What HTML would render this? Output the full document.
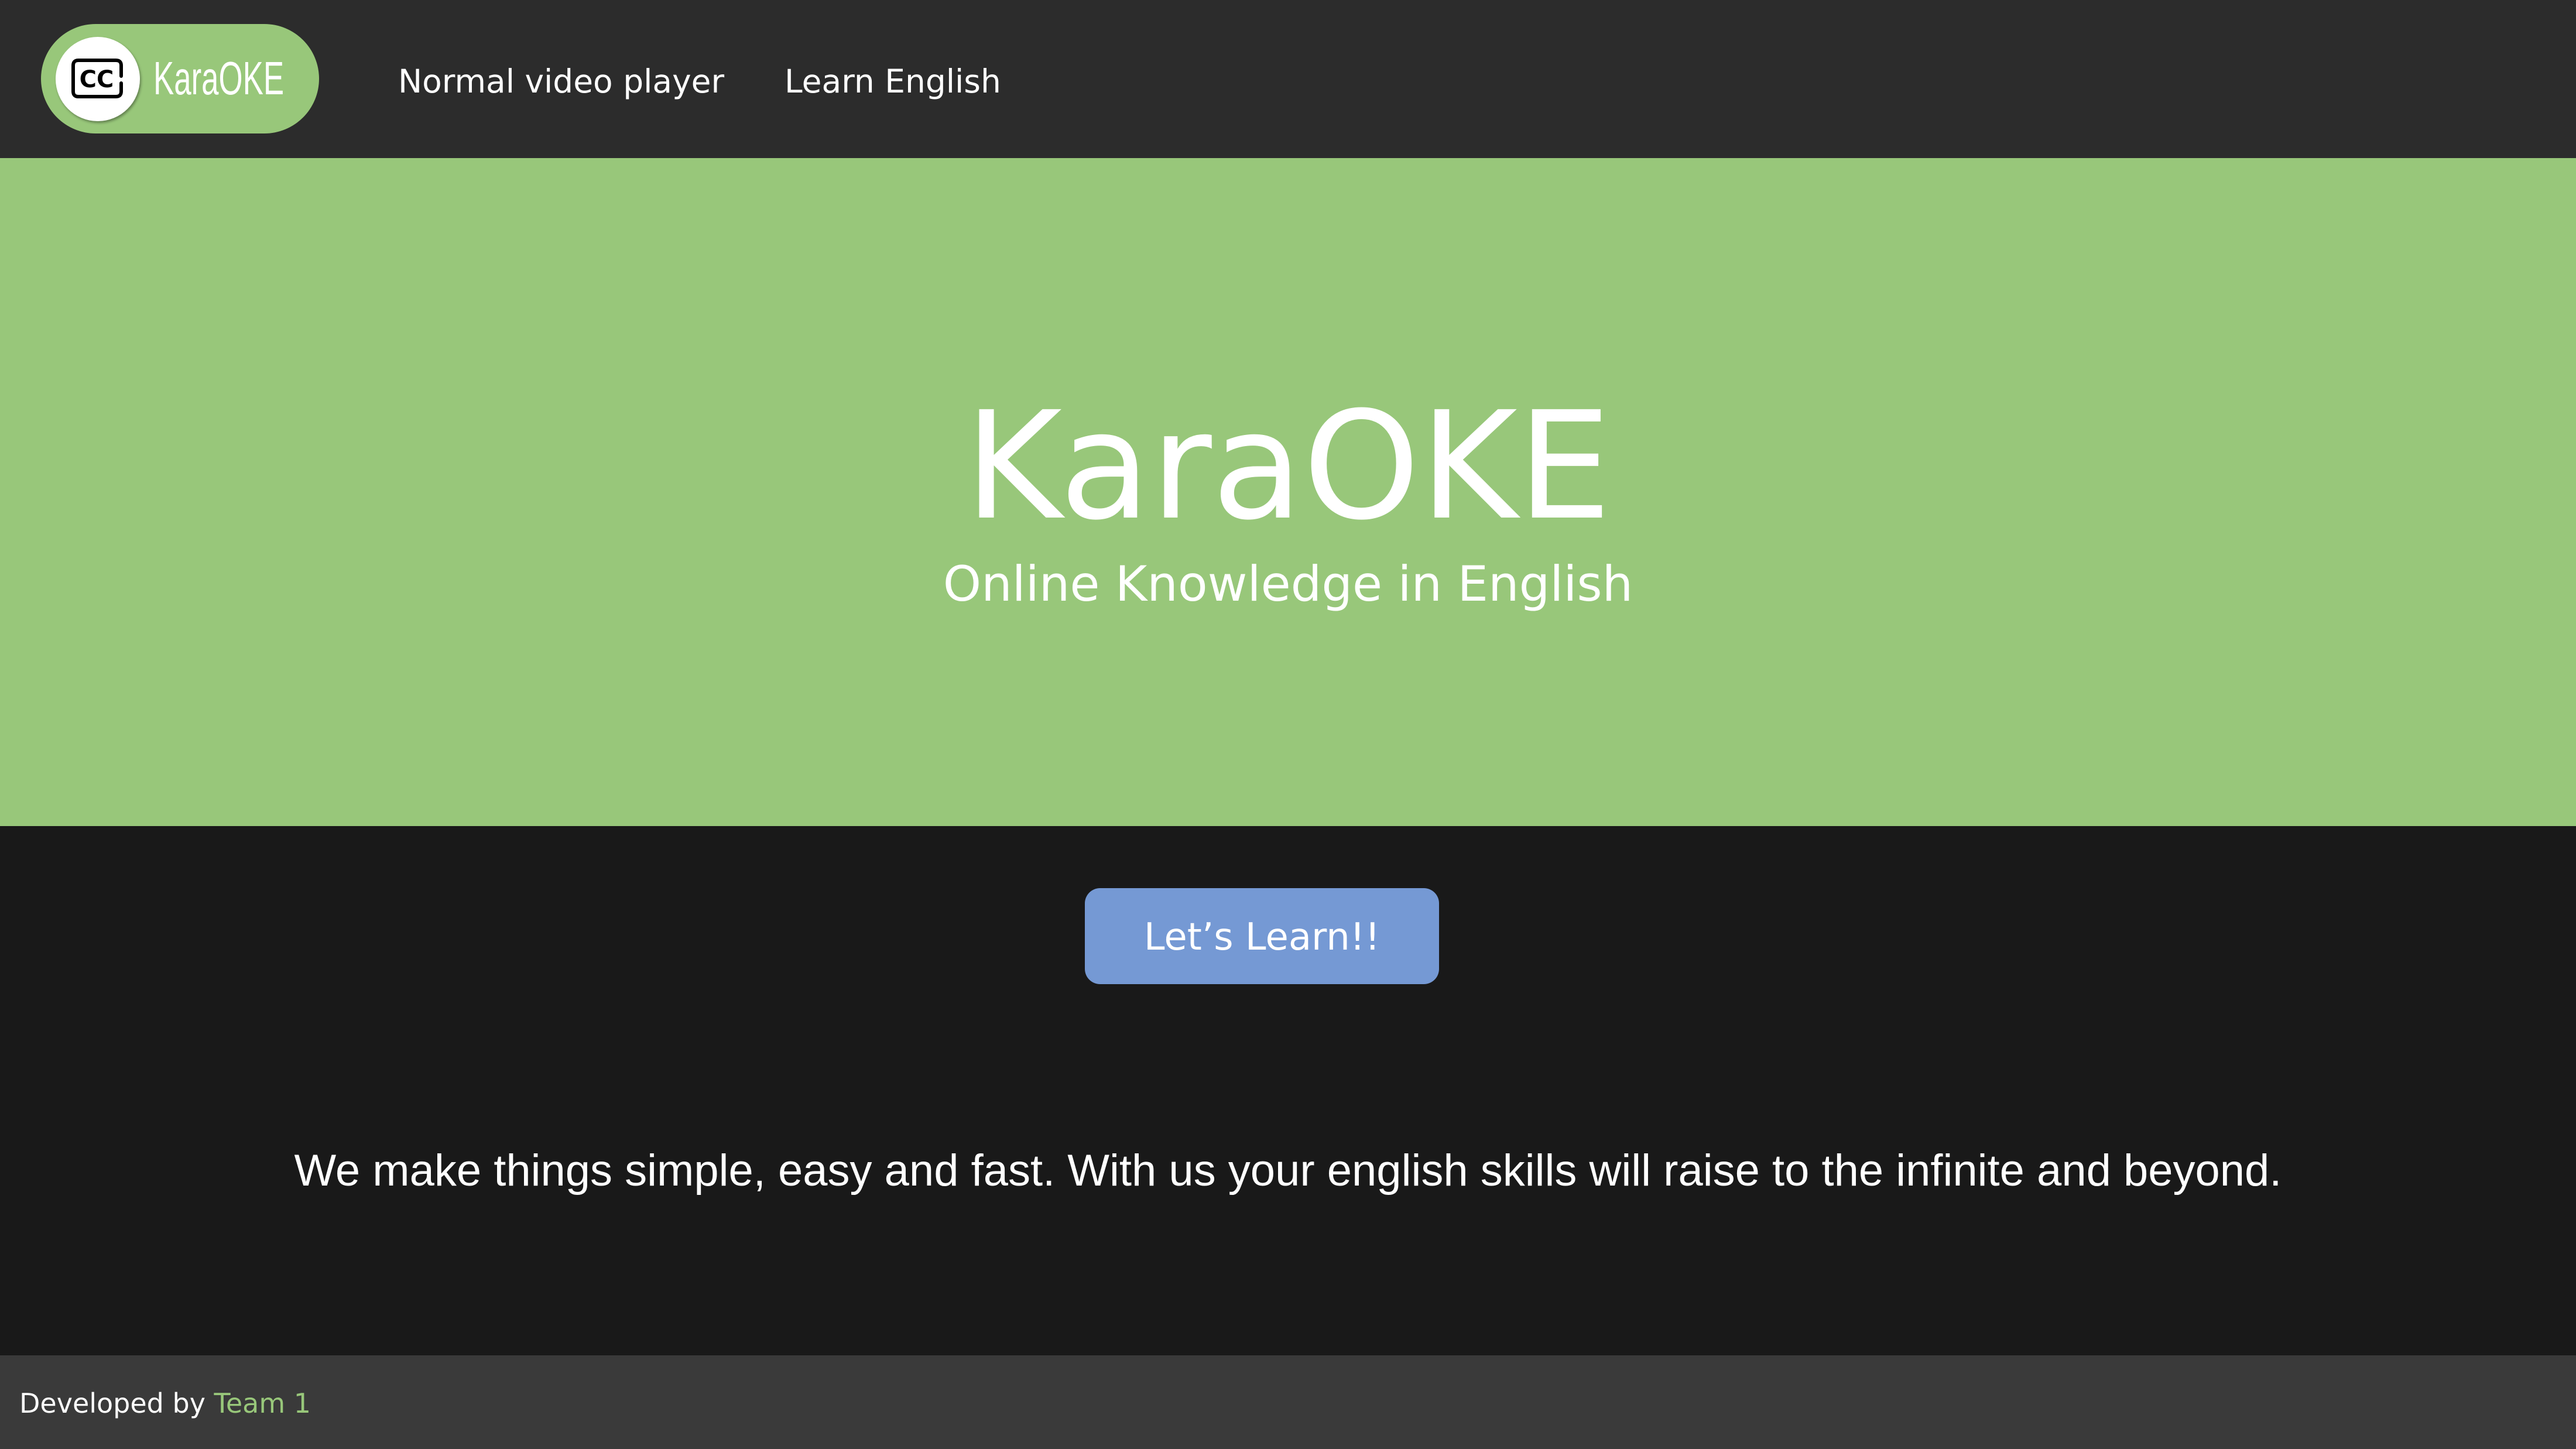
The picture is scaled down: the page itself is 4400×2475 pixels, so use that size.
<!DOCTYPE html>
<html><head><meta charset="utf-8"><style>
*{margin:0;padding:0;box-sizing:border-box}
html,body{width:4400px;height:2475px;overflow:hidden;background:#191919;font-family:"DejaVu Sans",Verdana,sans-serif}
.hdr{position:absolute;left:0;top:0;width:4400px;height:270px;background:#2c2c2c}
.pill{position:absolute;left:70px;top:41px;width:475px;height:187px;background:#98c77a;border-radius:94px}
.circ{position:absolute;left:95px;top:63px;width:144px;height:144px;border-radius:50%;background:#fff;box-shadow:2px 3px 4px rgba(0,0,0,.35)}
.logo{position:absolute;left:262px;top:86px;font-family:"Liberation Sans",sans-serif;font-size:80px;color:#fff;transform:scaleX(.66);transform-origin:left;line-height:95px}
.nav{position:absolute;top:104px;font-size:55px;color:#fff;line-height:70px}
.hero{position:absolute;left:0;top:270px;width:4400px;height:1141px;background:#98c77a}
.t1{position:absolute;left:0;width:4400px;text-align:center;color:#fff;font-size:254px;top:646px;line-height:300px}
.t2{position:absolute;left:0;width:4400px;text-align:center;color:#fff;font-size:83px;top:943px;line-height:110px}
.btn{position:absolute;left:1853px;top:1517px;width:605px;height:164px;background:#7599d4;border-radius:26px;color:#fff;font-size:64px;text-align:center;line-height:168px}
.p{position:absolute;left:0;width:4400px;text-align:center;color:#fff;font-family:"Liberation Sans",sans-serif;font-size:76px;top:1955px;line-height:90px}
.ftr{position:absolute;left:0;top:2315px;width:4400px;height:160px;background:#3a3a3a}
.ft{position:absolute;left:33px;top:2367px;font-size:46px;color:#fff;line-height:60px}
</style></head><body>
<div class="hdr">
<div class="pill"></div>
<div class="circ"></div>
<svg style="position:absolute;left:120px;top:98px" width="94" height="72" viewBox="0 0 94 72">
<path d="M87 44 V58 Q87 67 78 67 H14 Q5 67 5 58 V14 Q5 5 14 5 H78 Q87 5 87 14 V32" fill="none" stroke="#000" stroke-width="6" stroke-linecap="round"/>
<text x="45" y="51" text-anchor="middle" font-family="DejaVu Sans" font-size="40" font-weight="bold" fill="#000">CC</text>
</svg>
<div class="logo">KaraOKE</div>
<div class="nav" style="left:680px">Normal video player</div>
<div class="nav" style="left:1340px">Learn English</div>
</div>
<div class="hero"></div>
<div class="t1">KaraOKE</div>
<div class="t2">Online Knowledge in English</div>
<div class="btn">Let’s Learn!!</div>
<div class="p">We make things simple, easy and fast. With us your english skills will raise to the infinite and beyond.</div>
<div class="ftr"></div>
<div class="ft">Developed by <span style="color:#98c77a">Team 1</span></div>
</body></html>
